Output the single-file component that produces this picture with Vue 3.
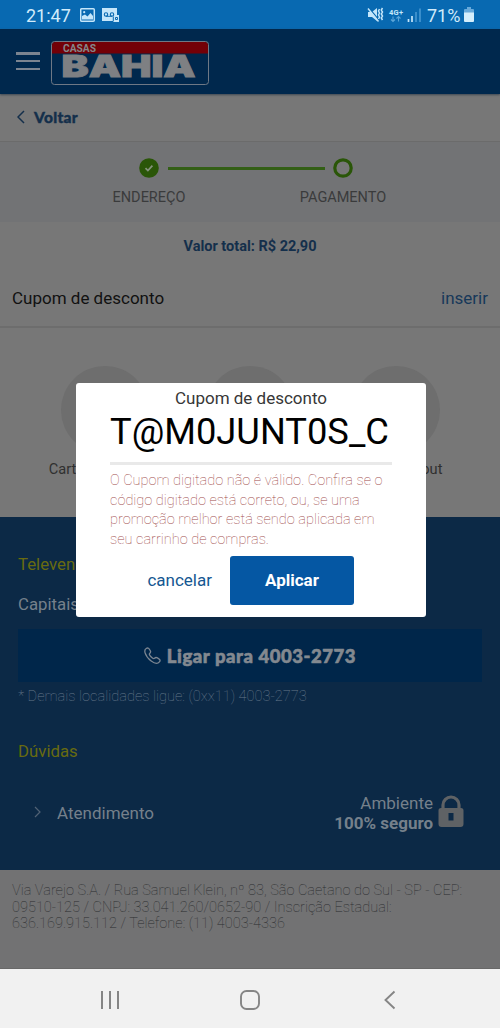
<script setup>
const payments = ['Cartão de crédito', 'Boleto', 'Visa Checkout']
const errorLines = [
  'O Cupom digitado não é válido. Confira se o',
  'código digitado está correto, ou, se uma',
  'promoção melhor está sendo aplicada em',
  'seu carrinho de compras.'
]
const legalLines = [
  'Via Varejo S.A. / Rua Samuel Klein, nº 83, São Caetano do Sul - SP - CEP:',
  '09510-125 / CNPJ: 33.041.260/0652-90 / Inscrição Estadual:',
  '636.169.915.112 / Telefone: (11) 4003-4336'
]
</script>

<template>
  <div class="screen">
    <div class="status">
      <span class="clock">21:47</span>
      <svg class="st-left" width="40" height="16" viewBox="0 0 40 16">
        <rect x="0.7" y="1.700" width="13.6" height="12.6" rx="1" fill="none" stroke="#c4e6fa" stroke-width="1.5" />
        <path d="M2 12.500V9l3-1.5 2.5 2 3-3.5 2.5 3v3.5z" fill="#c4e6fa" />
        <circle cx="4.2" cy="5.2" r="1.1" fill="#c4e6fa" />
        <path d="M22 1h15v7h2v7h-6v-1H22z" fill="#c4e6fa" />
        <circle cx="26" cy="7.500" r="1.700" fill="none" stroke="#0869b1" stroke-width="1.100" />
        <circle cx="32" cy="7.500" r="1.700" fill="none" stroke="#0869b1" stroke-width="1.100" />
        <path d="M26 9.300h6M33.300 14.500v-5M35.500 12.500v-2h2v2z" fill="none" stroke="#0869b1" stroke-width="1" />
      </svg>
      <svg class="st-right" width="58" height="18" viewBox="0 0 58 18">
        <path d="M1 6h4l5-4v13l-5-4H1z" fill="#c4e6fa" />
        <path d="M1.500 1.500l10 12" stroke="#0869b1" stroke-width="1.200" />
        <path d="M1 2.500l10.500 13" stroke="#c4e6fa" stroke-width="1.400" />
        <path d="M12.500 3l-1 2 1 2-1 2 1 2-1 2M15.500 2l-1.200 2 1.200 2-1.200 2 1.200 2-1.200 2 1.200 2" fill="none" stroke="#c4e6fa" stroke-width="1.500" />
        <text x="22" y="8.500" font-family="Roboto, sans-serif" font-size="7.500" font-weight="700" fill="#c4e6fa" textLength="14">4G+</text>
        <path d="M26 10.500v5M24 13.500l2 2 2-2M31.500 15.500v-5M29.500 12.500l2-2 2 2" fill="none" stroke="#5ba5d8" stroke-width="1.100" />
        <path d="M41.500 16v-3" stroke="#c4e6fa" stroke-width="1.700" />
        <path d="M45 16v-6" stroke="#c4e6fa" stroke-width="1.700" />
        <path d="M49 16V6M53 16V2.500" stroke="#4b9bd3" stroke-width="1.500" />
      </svg>
      <span class="percent">71%</span>
      <svg class="battery" width="12" height="16" viewBox="0 0 12 16">
        <path d="M4 0h4v2h-4z" fill="#68aadb" />
        <rect x="1" y="2" width="10" height="5" rx="1" fill="#68aadb" />
        <path d="M1 5.500h10V14a1 1 0 0 1-1 1H2a1 1 0 0 1-1-1z" fill="#d4eefc" />
      </svg>
    </div>

    <header class="header">
      <div class="burger"><i></i><i></i><i></i></div>
      <svg class="logo" width="158" height="44" viewBox="0 0 158 44">
        <rect x="0.500" y="0.500" width="157" height="43" rx="3" fill="#00284d" />
        <path d="M1 12.500V4a3 3 0 0 1 3-3h150a3 3 0 0 1 3 3v8.500z" fill="#730007" />
        <rect x="0.500" y="0.500" width="157" height="43" rx="3" fill="none" stroke="#6e7885" />
        <text x="12" y="11.300" font-family="Roboto, sans-serif" font-size="11.500" font-weight="700" fill="#85878a" textLength="33" lengthAdjust="spacingAndGlyphs">CASAS</text>
        <text x="10.500" y="35.500" font-family="Inter, sans-serif" font-size="30.500" font-weight="900" fill="#7e8083" stroke="#7e8083" stroke-width="0.900" textLength="134" lengthAdjust="spacingAndGlyphs">BAHIA</text>
      </svg>
    </header>

    <div class="back">
      <svg width="8" height="14" viewBox="0 0 8 14"><path d="M7 1L1 7l6 6" fill="none" stroke="#142f4b" stroke-width="1.500" /></svg>
      <span>Voltar</span>
    </div>

    <div class="steps">
      <div class="step">
        <svg width="20" height="20" viewBox="0 0 20 20"><circle cx="10" cy="10" r="9.800" fill="#2a5608" /><path d="M6.500 10.200l2.400 2.400 4.500-5" fill="none" stroke="#85927c" stroke-width="1.700" /></svg>
        <span>ENDEREÇO</span>
      </div>
      <div class="track"></div>
      <div class="step">
        <svg width="20" height="20" viewBox="0 0 20 20"><circle cx="10" cy="10" r="8.200" fill="#777" stroke="#2a5608" stroke-width="3.200" /></svg>
        <span>PAGAMENTO</span>
      </div>
    </div>

    <div class="total">Valor total: R$ 22,90</div>
    <div class="coupon"><span>Cupom de desconto</span><a>inserir</a></div>

    <div class="payments">
      <div v-for="p in payments" :key="p" class="payment"><i></i><span>{{ p }}</span></div>
    </div>

    <footer class="footer">
      <h3>Televendas</h3>
      <p class="cap">Capitais e regiões metropolitanas</p>
      <div class="call">
        <svg width="18" height="18" viewBox="0 0 18 18"><path d="M2.200 1.500C4 .3 5 1.200 6.300 3.700c.8 1.500.3 2-.6 2.700-.8.700-.2 1.700 1.300 3.300s2.700 2.300 3.500 1.600c.9-.9 1.500-1.200 2.900-.4 2.700 1.500 3.300 2.400 2 4-1.700 2.200-4.500 2-8.200-.8C4.500 12 1.900 8.600 1 5.600.5 3.500.9 2.300 2.200 1.500z" fill="none" stroke="#7b8692" stroke-width="1.300" /></svg>
        <span>Ligar para 4003-2773</span>
      </div>
      <p class="note">* Demais localidades ligue: (0xx11) 4003-2773</p>
      <h3 class="faq">Dúvidas</h3>
      <div class="help">
        <svg width="7" height="12" viewBox="0 0 7 12"><path d="M1 1l5 5-5 5" fill="none" stroke="#526275" stroke-width="1.200" /></svg>
        <span class="att">Atendimento</span>
        <div class="secure"><span>Ambiente</span><b>100% seguro</b></div>
        <svg width="26" height="32" viewBox="0 0 26 32">
          <path d="M5 15V10a8 8 0 0 1 16 0v5" fill="none" stroke="#5f6265" stroke-width="3.200" />
          <path fill-rule="evenodd" d="M3 13h20a2.500 2.500 0 0 1 2.500 2.500V29a3 3 0 0 1-3 3h-19a3 3 0 0 1-3-3V15.500A2.500 2.500 0 0 1 3 13zM10.500 18v7.500h5V18z" fill="#5f6265" />
        </svg>
      </div>
    </footer>

    <div class="legal"><div v-for="l in legalLines" :key="l">{{ l }}</div></div>

    <nav class="nav">
      <svg width="20" height="20" viewBox="0 0 20 20"><path d="M2 1v18M10 1v18M18 1v18" stroke="#858585" stroke-width="2" /></svg>
      <svg width="20" height="20" viewBox="0 0 20 20"><rect x="1" y="1" width="18" height="18" rx="5.500" fill="none" stroke="#858585" stroke-width="1.900" /></svg>
      <svg width="20" height="20" viewBox="0 0 20 20"><path d="M15.500 1.500L6.500 10l9 8.500" fill="none" stroke="#858585" stroke-width="1.900" /></svg>
    </nav>

    <div class="modal">
      <div class="m-title">Cupom de desconto</div>
      <div class="m-code">T@M0JUNT0S_C</div>
      <div class="m-error"><div v-for="l in errorLines" :key="l">{{ l }}</div></div>
      <div class="m-actions"><a>cancelar</a><button>Aplicar</button></div>
    </div>
  </div>
</template>

<style>
body { margin: 0; }
</style>
<style scoped>
* { box-sizing: border-box; }
svg { display: block; flex: none; }
.screen { position: relative; width: 500px; height: 1028px; overflow: hidden; background: #777; font-family: Roboto, "Liberation Sans", sans-serif; display: flex; flex-direction: column; white-space: nowrap; }
.screen > * { flex: none; }
.status { height: 29px; background: #0869b1; display: flex; align-items: center; padding: 1px 24px 0 26px; color: #d0ebfb; font-size: 18px; }
.clock { width: 54px; }
.st-right { margin-left: 247px; }
.percent { margin-left: 2px; width: 35px; }
.battery { margin-left: 1px; }
.header { height: 65px; background: #00284d; display: flex; align-items: center; padding: 2px 0 0 16px; box-shadow: 0 1px 2px #3d4752; position: relative; }
.burger { width: 24px; height: 18px; display: flex; flex-direction: column; justify-content: space-between; margin-top: -3px; }
.burger i { height: 2.500px; background: #7b8490; }
.logo { margin-left: 11px; margin-top: 1px; }
.back { height: 48px; border-bottom: 1px solid #6b6b6b; display: flex; align-items: center; padding-left: 17px; gap: 9px; font: 900 15.5px Lato, sans-serif; color: #142f4b; letter-spacing: .3px; -webkit-text-stroke: .4px #142f4b; }
.back svg { margin-top: -2px; }
.back span { margin-top: -1px; }
.steps { height: 80px; background: #727375; display: flex; padding: 16px 107px 0; }
.step { width: 84px; display: flex; flex-direction: column; align-items: center; font-size: 14.500px; line-height: 18px; gap: 11px; color: #3a3b3c; }
.step + .track + .step { width: 86px; }
.track { height: 3px; width: 157px; background: #335f16; margin: 9px -25px 0 -23px; }
.total { height: 48px; line-height: 49px; text-align: center; font-size: 14.500px; font-weight: 700; color: #142f4b; }
.coupon { height: 58px; padding: 0 12px; display: flex; justify-content: space-between; align-items: center; font-size: 17px; color: #111; border-bottom: 2px solid #6d6d6d; }
.coupon a { color: #17395a; }
.payments { height: 189px; padding: 38px 32px 0; display: grid; grid-template-columns: repeat(3, 145.5px); }
.payment { display: flex; flex-direction: column; align-items: center; gap: 6px; font-size: 14.600px; line-height: 18px; color: #303030; }
.payment i { width: 88px; height: 88px; border-radius: 50%; background: #6e6e6e; }
.footer { height: 353px; background: #0c2946; padding: 36px 18px 0; color: #75808b; }
h3 { margin: 0; font-size: 16.800px; line-height: 22px; font-weight: 400; color: #686b10; }
.cap { margin: 18px 0 0; font-size: 16.800px; line-height: 22px; }
.call { margin-top: 14px; height: 53px; background: #00264a; display: flex; align-items: center; justify-content: center; gap: 5px; font: 900 18.500px Lato, sans-serif; letter-spacing: .55px; color: #838990; -webkit-text-stroke: .6px #838990; }
.note { margin: 4px 0 0; font-size: 14.600px; line-height: 20px; font-weight: 100; color: #66788b; }
.faq { margin-top: 34px; }
.help { margin: 31px 0 0; height: 40px; display: flex; align-items: center; padding: 0 0 0 16px; font-size: 17px; line-height: 20px; }
.help svg:first-child { margin-top: -3px; }
.att { margin-left: 16px; }
.secure { margin-left: auto; display: flex; flex-direction: column; text-align: right; margin-right: 5px; }
.secure b { font-size: 17px; }
.help svg:last-child { margin-right: 18px; margin-top: -5px; }
.legal { height: 99px; background: #727273; padding: 13px 12px; font-size: 14.550px; font-weight: 100; line-height: 16.700px; color: #2c2e30; border-bottom: 1px solid #686868; }
.nav { height: 59px; background: #f1f1f1; display: flex; justify-content: space-between; padding: 21px 101px 0 100px; }
.modal { position: absolute; left: 76px; top: 383px; width: 350px; height: 234px; border-radius: 3px; background: #fff; padding: 4px 34px 0; }
.m-title { text-align: center; font-size: 17px; line-height: 22px; color: #373737; }
.m-code { height: 56px; border-bottom: 3px solid #e9e9e9; font-size: 36.300px; line-height: 45px; color: #000; }
.m-error { margin-top: 6px; font-size: 14.550px; font-weight: 100; line-height: 19.500px; color: #a04a4a; }
.m-actions { display: flex; align-items: center; justify-content: flex-end; gap: 18px; margin: 7px 38px 0 0; font-size: 17px; color: #155791; }
.m-actions a { margin-top: -2px; }
button { width: 124px; height: 49px; border: 0; border-radius: 3px; background: #0557a3; color: #fff; font: 700 17px Roboto, sans-serif; padding: 0 0 1px; }
</style>
